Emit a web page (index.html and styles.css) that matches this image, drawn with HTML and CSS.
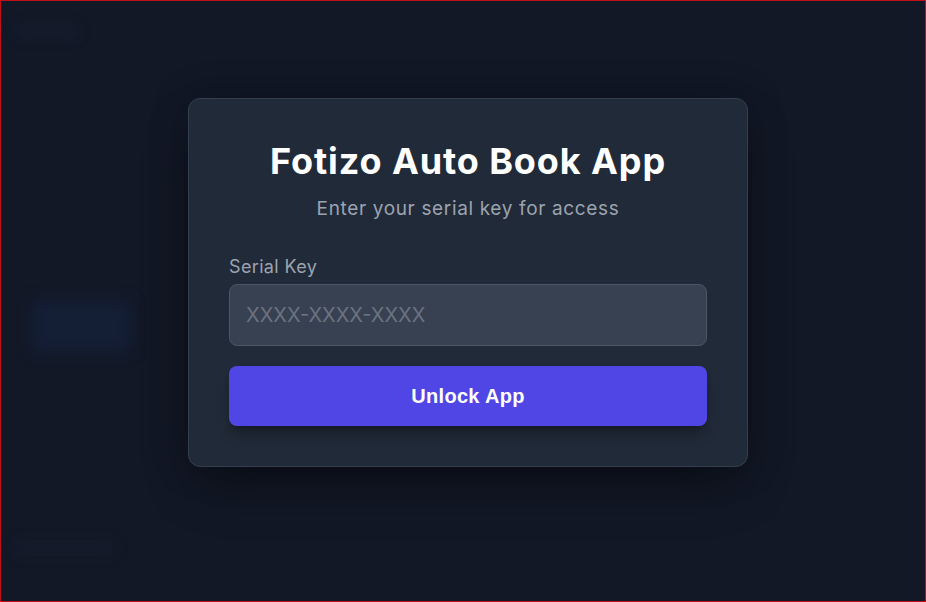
FILE: index.html
```html
<!DOCTYPE html>
<html lang="en">
<head>
<meta charset="utf-8">
<title>Fotizo Auto Book App</title>
<link rel="stylesheet" href="styles.css">
</head>
<body>
<div class="frame">
  <div class="backdrop" aria-hidden="true">
    <div class="ghost ghost-top"></div>
    <div class="ghost ghost-btn"></div>
    <div class="ghost ghost-bottom"></div>
  </div>
  <div class="stage">
    <form class="card">
      <h1 class="title">Fotizo Auto Book App</h1>
      <p class="subtitle">Enter your serial key for access</p>
      <label class="label" for="serial">Serial Key</label>
      <input class="input" id="serial" type="text" placeholder="XXXX-XXXX-XXXX">
      <button class="button" type="button">Unlock App</button>
    </form>
  </div>
</div>
</body>
</html>
```

FILE: styles.css
```css
* { box-sizing: border-box; }

html, body {
  margin: 0;
  padding: 0;
  background: #111827;
}

body {
  font-family: Inter, "Noto Sans", sans-serif;
  color: #ffffff;
}

.frame {
  position: relative;
  width: 100%;
  height: 100vh;
  border: 1px solid #c2101a;
  background: #121826;
  overflow: hidden;
}

.backdrop {
  position: absolute;
  inset: 0;
  filter: blur(7px);
}

.ghost {
  position: absolute;
  border-radius: 6px;
}

.ghost-top {
  left: 14px;
  top: 24px;
  width: 64px;
  height: 12px;
  background: rgba(40, 50, 70, 0.18);
}

.ghost-btn {
  left: 30px;
  top: 299px;
  width: 100px;
  height: 52px;
  background: #141e35;
}

.ghost-bottom {
  left: 14px;
  top: 540px;
  width: 100px;
  height: 14px;
  background: rgba(40, 50, 70, 0.15);
}

.stage {
  position: relative;
  display: flex;
  align-items: flex-start;
  padding: 97px 0 0 187px;
}

.card {
  width: 560px;
  padding: 40px;
  background: #212a38;
  border: 1px solid #353e4c;
  border-radius: 12px;
  box-shadow: 0 25px 50px -12px rgba(0, 0, 0, 0.45), 0 0 40px rgba(0, 0, 0, 0.2);
  display: flex;
  flex-direction: column;
}

.title {
  margin: 0;
  font-size: 36px;
  line-height: 44px;
  font-weight: 700;
  letter-spacing: 0.9px;
  text-align: center;
  color: #ffffff;
}

.subtitle {
  margin: 12px 0 0;
  font-size: 19px;
  line-height: 28px;
  letter-spacing: 0.65px;
  text-align: center;
  color: #9ca3af;
}

.label {
  margin-top: 32px;
  font-size: 18px;
  line-height: 24px;
  letter-spacing: 0.35px;
  color: #9ca3af;
}

.input {
  margin-top: 5px;
  width: 100%;
  padding: 16px 16px;
  font-family: Inter, "Noto Sans", sans-serif;
  font-size: 20px;
  line-height: 28px;
  color: #ffffff;
  background: #374151;
  border: 1px solid #4b5563;
  border-radius: 8px;
  outline: none;
}

.input::placeholder {
  color: #6b7280;
}

.button {
  margin-top: 20px;
  width: 100%;
  padding: 16px;
  font-family: "Liberation Sans", Arial, sans-serif;
  font-size: 20px;
  line-height: 28px;
  font-weight: 700;
  letter-spacing: 0.3px;
  color: #ffffff;
  background: #4f46e5;
  border: none;
  border-radius: 8px;
  box-shadow: 0 10px 15px -3px rgba(0, 0, 0, 0.3), 0 4px 6px -4px rgba(0, 0, 0, 0.3);
}
```
